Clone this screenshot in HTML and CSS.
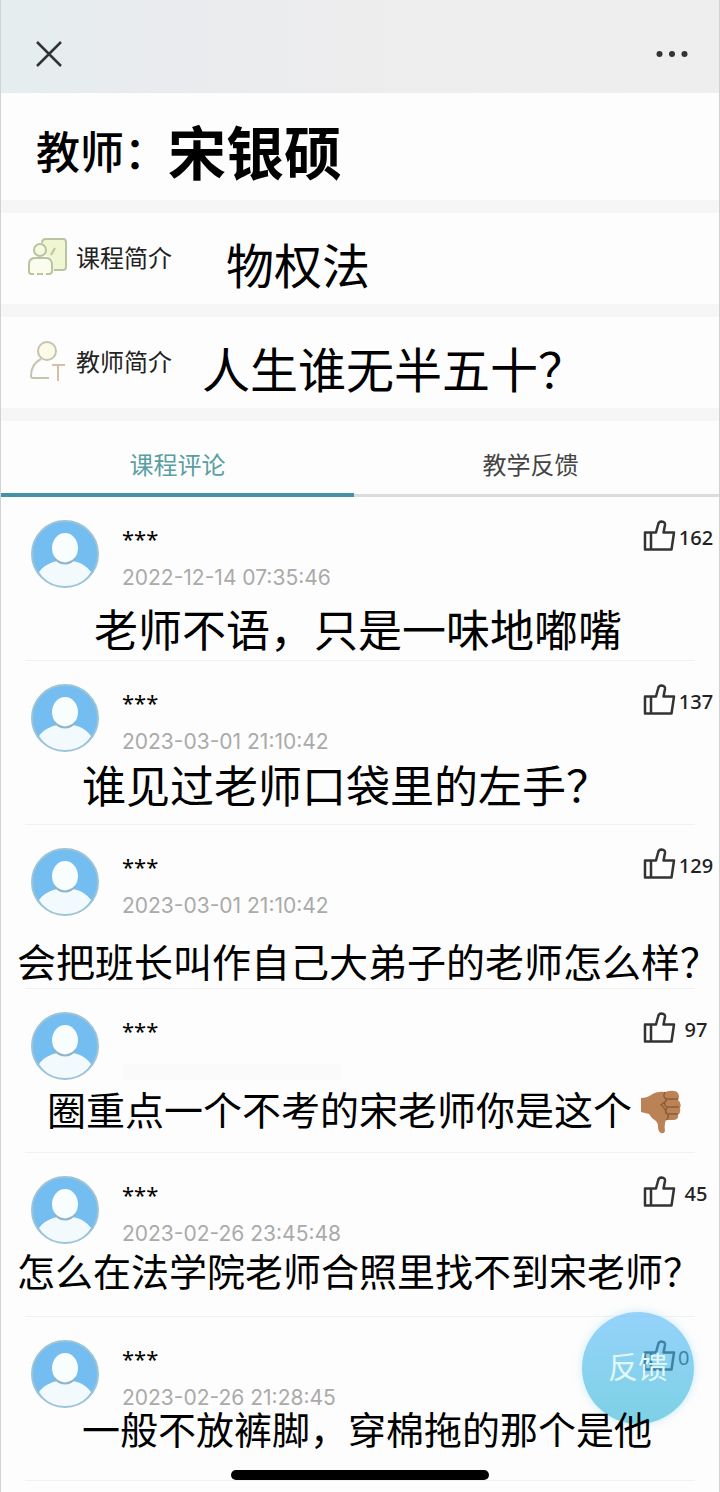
FILE: index.html
```html
<!DOCTYPE html>
<html lang="zh-CN">
<head>
    <meta charset="UTF-8">
    <meta name="viewport" content="width=device-width, initial-scale=1.0">
    <title>课程评论</title>
    <link rel="stylesheet" href="styles.css">
</head>
<body>
    <!-- Shared icons -->
    <svg class="sprite" aria-hidden="true">
        <symbol id="avatar" viewBox="0 0 68 68">
            <circle cx="34" cy="34" r="33" fill="#74bdf0"/>
            <path d="M8 52C14 44 22 42 26 41C31 45 37 45 42 41C48 42 55 45 60 52C54 62 45 67 34 67S14 62 8 52Z" fill="#f3fafd"/>
            <ellipse cx="34" cy="28" rx="13" ry="15" fill="#f8fdfe"/>
            <path d="M23 38Q34 49 45 38" fill="none" stroke="#8fb5c6" stroke-width="2"/>
            <circle cx="34" cy="34" r="33" fill="none" stroke="#9cc3d6" stroke-width="2"/>
        </symbol>
        <symbol id="thumb" viewBox="0 0 34 32">
            <path d="M3 12.500H14L16 5Q16.500 1.500 19.500 1.500Q23.500 2 23 5L21.500 12.500H32L29.500 29.500H3ZM9 12.500V29.500" fill="none" stroke="currentColor" stroke-width="2.500" stroke-linejoin="round"/>
        </symbol>
    </svg>

    <div class="page">
        <header class="topbar">
            <button type="button" aria-label="关闭">
                <svg width="26" height="26" viewBox="0 0 26 26"><path d="M1 1L25 25M25 1L1 25" stroke="#333" stroke-width="2.500"/></svg>
            </button>
            <button type="button" aria-label="更多">
                <svg width="32" height="26" viewBox="0 0 32 26" fill="#333"><circle cx="3.500" cy="13" r="3"/><circle cx="16" cy="13" r="3"/><circle cx="28.500" cy="13" r="3"/></svg>
            </button>
        </header>

        <section class="teacher">
            <span class="teacher-label">教师：</span>
            <h1>宋银硕</h1>
        </section>

        <section class="intro">
            <svg width="40" height="40" viewBox="0 0 40 40" fill="none" stroke="#b9c4a0" stroke-width="2">
                <path d="M14 7V5Q14 2 18 2H35Q38 2 38 5V30Q38 33 35 33H25V22L14 16Z" fill="#f0f6d2" stroke="none"/>
                <path d="M14 6Q14 2 18 2H35Q38 2 38 5V30Q38 33 35 33H26M27 11L23 18"/>
                <circle cx="12" cy="13" r="6" fill="#f5f9e0"/>
                <path d="M6 37H3Q1 37 1 34V27Q1 22 6 21H19Q24 22 24 27V34Q24 37 21 37H18M9 37H15" fill="#fbfcee"/>
            </svg>
            <span class="intro-label">课程简介</span>
            <span class="intro-value course">物权法</span>
        </section>

        <section class="intro">
            <svg width="40" height="40" viewBox="0 0 40 40" fill="none" stroke="#c3c5ae" stroke-width="2">
                <circle cx="19" cy="10" r="9" fill="#fbfbe8"/>
                <path d="M13 18Q3 23 3 35Q3 37 5 37H21"/>
                <path d="M24 24H37M30 24V40" stroke="#d5c0a4"/>
            </svg>
            <span class="intro-label">教师简介</span>
            <span class="intro-value">人生谁无半五十？</span>
        </section>

        <nav class="tabs">
            <a href="#comments" class="active">课程评论</a>
            <a href="#feedback">教学反馈</a>
        </nav>

        <main id="comments">
            <article class="comment">
                <div class="comment-head">
                    <svg class="avatar"><use href="#avatar"/></svg>
                    <div class="meta">
                        <span class="user">***</span>
                        <time>2022-12-14 07:35:46</time>
                    </div>
                    <button type="button" class="like"><svg><use href="#thumb"/></svg><span>162</span></button>
                </div>
                <p class="text large first">老师不语，只是一味地嘟嘴</p>
            </article>

            <article class="comment">
                <div class="comment-head">
                    <svg class="avatar"><use href="#avatar"/></svg>
                    <div class="meta">
                        <span class="user">***</span>
                        <time>2023-03-01 21:10:42</time>
                    </div>
                    <button type="button" class="like"><svg><use href="#thumb"/></svg><span>137</span></button>
                </div>
                <p class="text large second">谁见过老师口袋里的左手？</p>
            </article>

            <article class="comment">
                <div class="comment-head">
                    <svg class="avatar"><use href="#avatar"/></svg>
                    <div class="meta">
                        <span class="user">***</span>
                        <time>2023-03-01 21:10:42</time>
                    </div>
                    <button type="button" class="like"><svg><use href="#thumb"/></svg><span>129</span></button>
                </div>
                <p class="text medium third">会把班长叫作自己大弟子的老师怎么样？</p>
            </article>

            <article class="comment">
                <div class="comment-head">
                    <svg class="avatar"><use href="#avatar"/></svg>
                    <div class="meta">
                        <span class="user">***</span>
                        <span class="erased"></span>
                    </div>
                    <button type="button" class="like"><svg><use href="#thumb"/></svg><span>97</span></button>
                </div>
                <p class="text medium fourth">圈重点一个不考的宋老师你是这个<svg class="thumb-down" viewBox="0 0 42 44" role="img" aria-label="踩">
                    <path d="M1 8Q7 8 11 5Q17 1 25 2Q35 -1 38 3Q40 7 38 10Q42 13 40 18Q41 23 38 25Q39 29 34 30H26Q24 34 25 41Q24 44 21 43Q18 41 18 37Q18 33 16 31Q11 28 9 24L1 22Z" fill="#bb8355"/>
                    <path d="M25 2Q22 8 27 9H38M26 10Q23 15 27 17H39M27 18Q24 22 27 24H38M27 10L21 15Q25 18 27 24M26 30Q29 28 28 25" fill="none" stroke="#8d5c3b" stroke-width="1.500"/>
                </svg></p>
            </article>

            <article class="comment">
                <div class="comment-head">
                    <svg class="avatar"><use href="#avatar"/></svg>
                    <div class="meta">
                        <span class="user">***</span>
                        <time>2023-02-26 23:45:48</time>
                    </div>
                    <button type="button" class="like"><svg><use href="#thumb"/></svg><span>45</span></button>
                </div>
                <p class="text small fifth">怎么在法学院老师合照里找不到宋老师？</p>
            </article>

            <article class="comment">
                <div class="comment-head">
                    <svg class="avatar"><use href="#avatar"/></svg>
                    <div class="meta">
                        <span class="user">***</span>
                        <time>2023-02-26 21:28:45</time>
                    </div>
                    <button type="button" class="like none"><svg><use href="#thumb"/></svg><span>0</span></button>
                </div>
                <p class="text small sixth">一般不放裤脚，穿棉拖的那个是他</p>
            </article>
        </main>

        <button type="button" class="feedback">反馈</button>
        <div class="home-bar"></div>
    </div>
</body>
</html>
```
FILE: styles.css
```css
* {
    box-sizing: border-box;
}

body {
    margin: 0;
    background-color: #fdfdfd;
    color: #000;
    font-family: "Noto Sans CJK SC", sans-serif;
}

button {
    padding: 0;
    border: none;
    background: none;
    font-family: inherit;
    cursor: pointer;
}

svg {
    display: block;
    flex-shrink: 0;
}

.sprite {
    position: absolute;
    width: 0;
    height: 0;
}

.page {
    position: relative;
    overflow: hidden;
    padding-bottom: 11px;
    border-left: 1px solid #d2d2d2;
    border-right: 1px solid #d2d2d2;
}

/* Top bar */
.topbar {
    display: flex;
    justify-content: space-between;
    align-items: center;
    height: 93px;
    padding: 14px 31px 0 35px;
    background: linear-gradient(to right, #e5eeee, #e9ebee 20%, #ededee 50%, #eeeeef);
}

/* Teacher and course */
.teacher {
    display: flex;
    align-items: center;
    height: 120px;
    padding: 6px 0 0 35px;
    border-bottom: 13px solid #f6f6f6;
}

.teacher-label {
    font-size: 44px;
    font-weight: 500;
    line-height: 60px;
}

h1 {
    margin: 0;
    font-size: 58px;
    font-weight: 700;
    line-height: 60px;
}

.intro {
    display: flex;
    align-items: center;
    height: 104px;
    padding: 0 0 4px 27px;
    border-bottom: 13px solid #f6f6f6;
}

.intro-label {
    margin: 0 30px 0 8px;
    font-size: 24px;
    line-height: 36px;
    color: #222;
}

.intro-value {
    padding-top: 12px;
    font-size: 48px;
    line-height: 56px;
    white-space: nowrap;
}

.course {
    margin-left: 24px;
}

/* Tabs */
.tabs {
    display: grid;
    grid-template-columns: 1fr 1fr;
    height: 76px;
    padding-right: 12px;
    box-shadow: inset 0 -3px #d9dcdd;
}

.tabs a {
    padding-top: 25px;
    border-bottom: 4px solid transparent;
    font-size: 24px;
    line-height: 36px;
    text-align: center;
    text-decoration: none;
    color: #444;
}

.tabs .active {
    border-bottom-color: #4591a8;
    color: #5a9ea3;
}

/* Comments */
.comment {
    height: 164px;
    padding-top: 23px;
    background: linear-gradient(to right, #f1f1f1, #f1f1f1) no-repeat 24px 100% / calc(100% - 48px) 1px;
}

.comment-head {
    display: flex;
    height: 68px;
    padding-left: 30px;
}

.avatar {
    width: 68px;
    height: 68px;
}

.meta {
    display: flex;
    flex-direction: column;
    flex-grow: 1;
    padding-left: 23px;
}

.user {
    font-family: "Noto Sans", sans-serif;
    font-size: 22px;
    line-height: 36px;
}

time {
    margin-top: 8px;
    font-family: Inter, sans-serif;
    font-size: 21px;
    line-height: 28px;
    color: #aaa;
}

.erased {
    width: 220px;
    height: 16px;
    margin-top: 16px;
    background-color: #fafafa;
}

.like {
    display: flex;
    align-items: center;
    align-self: flex-start;
    gap: 2px;
    width: 77px;
    height: 32px;
    color: #333;
}

.like svg {
    width: 34px;
    height: 32px;
}

.like span {
    width: 36px;
    padding-top: 4px;
    font-family: "Noto Sans", sans-serif;
    font-size: 20px;
    font-weight: 500;
    line-height: 28px;
    color: #222;
}

.like.none {
    color: #000;
}

.like.none span {
    text-align: left;
    font-weight: 400;
    color: #000;
}

.text {
    position: relative;
    z-index: 2;
    margin: 0;
    line-height: 40px;
    white-space: nowrap;
}

.large {
    font-size: 44px;
}

.medium {
    font-size: 39px;
}

.small {
    font-size: 38px;
}

.first {
    padding: 20px 0 0 93px;
}

.second {
    padding: 12px 0 0 81px;
}

.third {
    padding: 24px 0 0 16px;
}

.fourth {
    padding: 8px 0 0 46px;
}

.fifth {
    padding: 6px 0 0 16px;
}

.sixth {
    padding: 0 0 0 81px;
}

.thumb-down {
    display: inline-block;
    width: 42px;
    height: 44px;
    margin: -8px 0 -4px 8px;
    vertical-align: middle;
}

/* Floating controls */
.feedback {
    position: absolute;
    right: 25px;
    bottom: 68px;
    z-index: 1;
    width: 112px;
    height: 112px;
    padding-bottom: 6px;
    border-radius: 50%;
    background: linear-gradient(rgba(100, 190, 250, 0.68), rgba(70, 190, 218, 0.7));
    box-shadow: 0 0 8px rgba(150, 220, 245, 0.5);
    font-size: 30px;
    color: #e2f8f8;
}

.home-bar {
    position: absolute;
    bottom: 12px;
    left: 50%;
    z-index: 3;
    width: 258px;
    height: 10px;
    margin-left: -129px;
    border-radius: 5px;
    background-color: #000;
}
```
